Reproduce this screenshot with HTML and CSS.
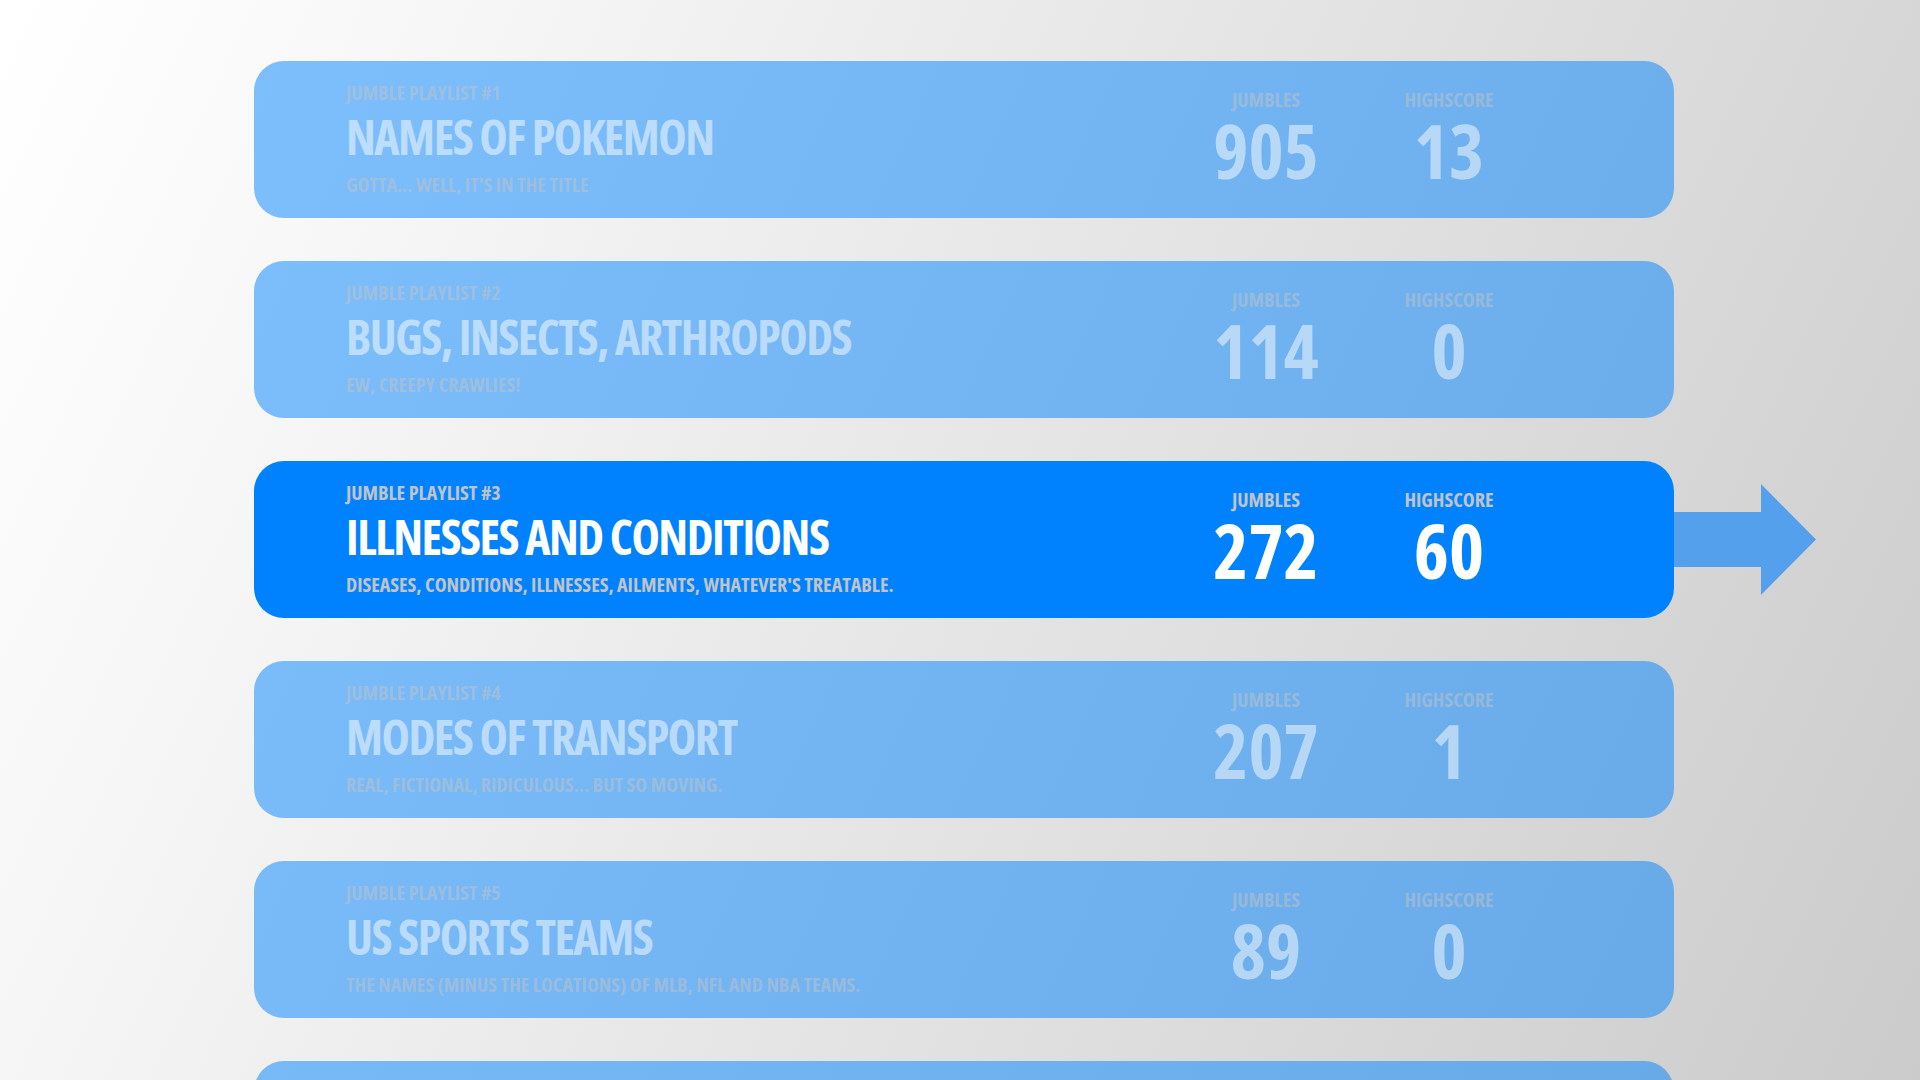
FILE: index.html
```html
<!DOCTYPE html>
<html lang="en">
<head>
    <meta charset="UTF-8">
    <title>Jumble Playlists</title>
    <link rel="stylesheet" href="styles.css">
</head>
<body>
    <div class="screen">
        <div class="playlists">
            <div class="card">
                <div class="info">
                    <div class="label">JUMBLE PLAYLIST #1</div>
                    <div class="title">NAMES OF POKEMON</div>
                    <div class="desc">GOTTA... WELL, IT'S IN THE TITLE</div>
                </div>
                <div class="stats">
                    <div class="stat"><div class="stat-label">JUMBLES</div><div class="stat-value">905</div></div>
                    <div class="stat"><div class="stat-label">HIGHSCORE</div><div class="stat-value">13</div></div>
                </div>
            </div>

            <div class="card">
                <div class="info">
                    <div class="label">JUMBLE PLAYLIST #2</div>
                    <div class="title">BUGS, INSECTS, ARTHROPODS</div>
                    <div class="desc">EW, CREEPY CRAWLIES!</div>
                </div>
                <div class="stats">
                    <div class="stat"><div class="stat-label">JUMBLES</div><div class="stat-value">114</div></div>
                    <div class="stat"><div class="stat-label">HIGHSCORE</div><div class="stat-value">0</div></div>
                </div>
            </div>

            <div class="card active">
                <div class="info">
                    <div class="label">JUMBLE PLAYLIST #3</div>
                    <div class="title">ILLNESSES AND CONDITIONS</div>
                    <div class="desc">DISEASES, CONDITIONS, ILLNESSES, AILMENTS, WHATEVER'S TREATABLE.</div>
                </div>
                <div class="stats">
                    <div class="stat"><div class="stat-label">JUMBLES</div><div class="stat-value">272</div></div>
                    <div class="stat"><div class="stat-label">HIGHSCORE</div><div class="stat-value">60</div></div>
                </div>
                <svg class="pointer" width="142" height="111" viewBox="0 0 142 111">
                    <path d="M0 28 H87 V0 L142 55.5 L87 111 V83 H0 Z" fill="#55a0ec"/>
                </svg>
            </div>

            <div class="card">
                <div class="info">
                    <div class="label">JUMBLE PLAYLIST #4</div>
                    <div class="title">MODES OF TRANSPORT</div>
                    <div class="desc">REAL, FICTIONAL, RIDICULOUS... BUT SO MOVING.</div>
                </div>
                <div class="stats">
                    <div class="stat"><div class="stat-label">JUMBLES</div><div class="stat-value">207</div></div>
                    <div class="stat"><div class="stat-label">HIGHSCORE</div><div class="stat-value">1</div></div>
                </div>
            </div>

            <div class="card">
                <div class="info">
                    <div class="label">JUMBLE PLAYLIST #5</div>
                    <div class="title">US SPORTS TEAMS</div>
                    <div class="desc">THE NAMES (MINUS THE LOCATIONS) OF MLB, NFL AND NBA TEAMS.</div>
                </div>
                <div class="stats">
                    <div class="stat"><div class="stat-label">JUMBLES</div><div class="stat-value">89</div></div>
                    <div class="stat"><div class="stat-label">HIGHSCORE</div><div class="stat-value">0</div></div>
                </div>
            </div>

            <!-- next playlist, only its top edge shows -->
            <div class="card"></div>
        </div>
    </div>
</body>
</html>
```
FILE: styles.css
```css
body {
    margin: 0;
    font-family: "Open Sans", "Roboto", sans-serif;
    font-stretch: 75%; /* condensed width */
    font-weight: 700;
}

.screen {
    height: 100vh;
    overflow: hidden;
    background: linear-gradient(115deg, #ffffff 0%, #f6f6f6 20%, #cbcbcb 100%);
    padding-top: 61px;
    box-sizing: border-box;
}

.playlists {
    width: 1420px;
    margin-left: 254px;
    display: flex;
    flex-direction: column;
    gap: 43px;
}

.card {
    position: relative;
    display: flex;
    align-items: flex-start;
    height: 157px;
    flex-shrink: 0;
    box-sizing: border-box;
    padding: 0 150px 0 92px;
    border-radius: 30px;
    background-color: rgba(0, 130, 255, 0.5);
}

.card > .info,
.card > .stats {
    opacity: 0.5;
}

.card.active {
    background-color: #0082ff;
}

.card.active > .info,
.card.active > .stats {
    opacity: 1;
}

.info {
    flex: 1;
    padding-top: 22px;
}

.label,
.desc,
.stat-label {
    font-size: 20px;
    line-height: 20px;
    color: #c0c4c8;
}

.title {
    margin: 10px 0 14px;
    font-size: 48px;
    line-height: 48px;
    letter-spacing: -1.5px;
    color: #fff;
}

.stats {
    display: flex;
    gap: 33px;
    padding-top: 29px;
}

.stat {
    width: 150px;
    text-align: center;
}

.stat-value {
    margin-top: 3px;
    font-size: 75px;
    line-height: 75px;
    color: #fff;
}

.pointer {
    position: absolute;
    left: 100%;
    top: 23px;
}
```
